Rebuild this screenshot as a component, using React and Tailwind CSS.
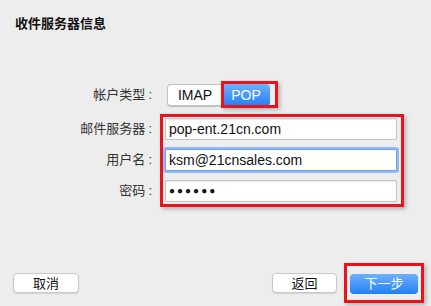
import React from 'react';

const font = { fontFamily: '"Liberation Sans", "Noto Sans CJK SC", sans-serif' };

function Field({ children, focused }) {
  return (
    <div
      className={
        'h-[22px] flex items-center px-[3px] bg-white text-[14px] text-[#111] rounded-[1px] ' +
        (focused
          ? 'border border-[#6d9fe6] shadow-[0_0_0_2px_#94bbf2]'
          : 'border border-[#c3c3c3] shadow-[inset_0_1px_1px_rgba(0,0,0,0.08)]')
      }
    >
      {children}
    </div>
  );
}

function Label({ children }) {
  return (
    <div className="h-[22px] flex items-center justify-end">
      {children}
      <span className="ml-[3px]">:</span>
    </div>
  );
}

export default function App() {
  return (
    <div className="w-[431px] h-[306px] bg-[#ededed] flex flex-col text-[#222]" style={font}>
      <div className="pt-[15px] pl-[15px] text-[13px] font-bold leading-[18px] text-[#111]">收件服务器信息</div>

      {/* account type */}
      <div className="mt-[51px] flex items-center h-[22px]">
        <div className="w-[152px] text-[13px] text-[#333]">
          <Label>帐户类型</Label>
        </div>
        <div className="ml-[15px] flex h-[22px] rounded-[4px] shadow-[0_1px_1px_rgba(0,0,0,0.2)]">
          <div className="w-[55px] flex items-center justify-center bg-white border border-[#c4c4c4] border-r-0 rounded-l-[4px] text-[14px] text-[#111]">
            IMAP
          </div>
          <div className="relative w-[48px] flex items-center justify-center bg-gradient-to-b from-[#6cb0fa] to-[#1f7ff5] rounded-r-[4px] text-[14px] text-white">
            POP
            <div className="absolute -left-[1px] -right-[8px] -top-[3px] -bottom-[2px] border-[3px] border-[#e8141c] shadow-[2px_2px_4px_rgba(0,0,0,0.25)]"></div>
          </div>
        </div>
      </div>

      {/* server fields */}
      <div className="mt-[8px] flex">
        <div className="w-[152px] pt-[4px] flex flex-col gap-[9px] text-[13px] text-[#333]">
          <Label>邮件服务器</Label>
          <Label>用户名</Label>
          <Label>密码</Label>
        </div>
        <div className="ml-[8px] w-[244px] border-[3px] border-[#e8141c] pt-[1px] pb-[2px] pl-[2px] pr-[4px] flex flex-col gap-[9px] shadow-[2px_2px_4px_rgba(0,0,0,0.25)]">
          <Field>pop-ent.21cn.com</Field>
          <Field focused>ksm@21cnsales.com</Field>
          <Field>
            <span className="text-[10px] tracking-[2px] leading-none">●●●●●●</span>
          </Field>
        </div>
      </div>

      {/* buttons */}
      <div className="mt-auto pb-[3px] pl-[13px] pr-[7px] flex items-center">
        <button className="w-[66px] h-[20px] bg-white border border-[#c8c8c8] rounded-[4px] text-[13px] text-[#111] shadow-[0_1px_1px_rgba(0,0,0,0.12)]">
          取消
        </button>
        <div className="flex-1"></div>
        <button className="w-[65px] h-[20px] bg-white border border-[#c8c8c8] rounded-[4px] text-[13px] text-[#111] shadow-[0_1px_1px_rgba(0,0,0,0.12)]">
          返回
        </button>
        <div className="ml-[7px] border-[3px] border-[#e8141c] px-[3px] py-[5px] shadow-[2px_2px_4px_rgba(0,0,0,0.25)]">
          <button className="w-[68px] h-[20px] bg-gradient-to-b from-[#6cb0fa] to-[#1f7ff5] rounded-[4px] text-[13px] text-white">
            下一步
          </button>
        </div>
      </div>
    </div>
  );
}
